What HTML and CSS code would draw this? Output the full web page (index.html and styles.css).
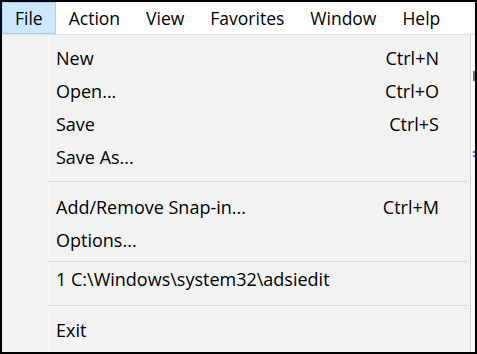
FILE: index.html
```html
<!DOCTYPE html>
<html lang="en">
<head>
  <meta charset="UTF-8">
  <title>File menu</title>
  <link rel="stylesheet" href="styles.css">
</head>
<body>

<div class="frame">
  <!-- menu bar -->
  <div class="menubar">
    <div class="bar-item active">File</div>
    <div class="bar-item">Action</div>
    <div class="bar-item">View</div>
    <div class="bar-item">Favorites</div>
    <div class="bar-item">Window</div>
    <div class="bar-item">Help</div>
  </div>

  <div class="below">
    <!-- open dropdown -->
    <div class="dropdown">
      <div class="item"><span>New</span><span>Ctrl+N</span></div>
      <div class="item"><span>Open...</span><span>Ctrl+O</span></div>
      <div class="item"><span>Save</span><span>Ctrl+S</span></div>
      <div class="item"><span>Save As...</span></div>
      <div class="sep"></div>
      <div class="item"><span>Add/Remove Snap-in...</span><span>Ctrl+M</span></div>
      <div class="item"><span>Options...</span></div>
      <div class="sep tight"></div>
      <div class="item"><span>1 C:\Windows\system32\adsiedit</span></div>
      <div class="sep loose"></div>
      <div class="item"><span>Exit</span></div>
    </div>
    <!-- window behind the menu -->
    <div class="behind">
      <span class="tick"></span>
      <span class="dots"></span>
    </div>
  </div>
</div>

</body>
</html>
```

FILE: styles.css
```css
body {
  margin: 0;
  font-family: "Open Sans", "Noto Sans", sans-serif;
  font-size: 18px;
  color: #000;
  background: #fff;
}

.frame {
  width: 477px;
  height: 354px;
  box-sizing: border-box;
  border: 2px solid #000;
  display: flex;
  flex-direction: column;
  background: #fff;
}

.menubar {
  display: flex;
  height: 32px;
  border-bottom: 1px solid #e3e3e3;
  background: #fff;
  font-size: 17.5px;
}

.bar-item {
  display: flex;
  align-items: center;
  padding: 0 12px;
  border: 1px solid transparent;
}

.bar-item.active {
  background: #cce8ff;
  border-color: #99d1ff;
}

.below {
  flex: 1;
  display: flex;
  min-height: 0;
}

.dropdown {
  flex: 1;
  background: #f2f2f2;
  border-right: 1px solid #cccccc;
  padding-top: 6px;
  background-image: linear-gradient(#f7f7f7, #f7f7f7);
  background-size: 1px 100%;
  background-position: 46px 0;
  background-repeat: no-repeat;
}

.item {
  display: flex;
  justify-content: space-between;
  align-items: center;
  height: 33px;
  padding: 0 31px 0 54px;
  white-space: nowrap;
}

.sep {
  height: 1px;
  background: #d7d7d7;
  margin: 8px 3px 8px 46px;
}

.sep.tight {
  margin-top: 5px;
  margin-bottom: 0;
}

.sep.loose {
  margin-top: 10px;
  margin-bottom: 7px;
}

.behind {
  width: 4px;
  display: flex;
  flex-direction: column;
  align-items: flex-end;
}

.tick {
  width: 2px;
  height: 10px;
  margin-top: 36px;
  background: #6d6d6d;
}

.dots {
  width: 2px;
  height: 6px;
  margin-top: 70px;
  border-top: 2px dotted #2a7fd4;
  border-bottom: 2px dotted #2a7fd4;
  box-sizing: border-box;
}
```
